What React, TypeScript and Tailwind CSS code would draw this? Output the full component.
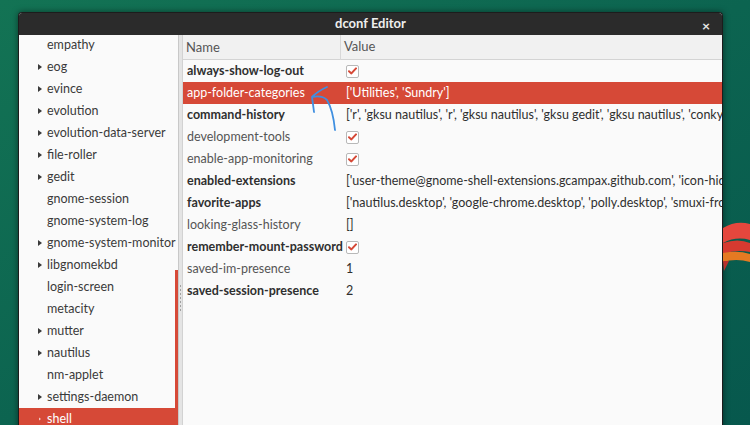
const SIDEBAR = [
  { name: 'empathy', arrow: false },
  { name: 'eog', arrow: true },
  { name: 'evince', arrow: true },
  { name: 'evolution', arrow: true },
  { name: 'evolution-data-server', arrow: true },
  { name: 'file-roller', arrow: true },
  { name: 'gedit', arrow: true },
  { name: 'gnome-session', arrow: false },
  { name: 'gnome-system-log', arrow: false },
  { name: 'gnome-system-monitor', arrow: true },
  { name: 'libgnomekbd', arrow: true },
  { name: 'login-screen', arrow: false },
  { name: 'metacity', arrow: false },
  { name: 'mutter', arrow: true },
  { name: 'nautilus', arrow: true },
  { name: 'nm-applet', arrow: false },
  { name: 'settings-daemon', arrow: true },
  { name: 'shell', arrow: true, selected: true },
];

interface Key {
  name: string;
  bold: boolean;
  value: string | boolean;
  selected?: boolean;
}

const KEYS: Key[] = [
  { name: 'always-show-log-out', bold: true, value: true },
  { name: 'app-folder-categories', bold: false, value: "['Utilities', 'Sundry']", selected: true },
  {
    name: 'command-history',
    bold: true,
    value: "['r', 'gksu nautilus', 'r', 'gksu nautilus', 'gksu gedit', 'gksu nautilus', 'conky', 'killall conky']",
  },
  { name: 'development-tools', bold: false, value: true },
  { name: 'enable-app-monitoring', bold: false, value: true },
  {
    name: 'enabled-extensions',
    bold: true,
    value: "['user-theme@gnome-shell-extensions.gcampax.github.com', 'icon-hider@kalnitsky.org']",
  },
  {
    name: 'favorite-apps',
    bold: true,
    value: "['nautilus.desktop', 'google-chrome.desktop', 'polly.desktop', 'smuxi-frontend-gnome.desktop']",
  },
  { name: 'looking-glass-history', bold: false, value: '[]' },
  { name: 'remember-mount-password', bold: true, value: true },
  { name: 'saved-im-presence', bold: false, value: '1' },
  { name: 'saved-session-presence', bold: true, value: '2' },
];

function Check() {
  return (
    <span className="flex h-[13px] w-[13px] items-center justify-center rounded-[2px] border border-[#b8b8b8] bg-white">
      <svg width="9" height="8" viewBox="0 0 9 8">
        <path d="M1 4.2 L3.4 6.4 L8 1.4" fill="none" stroke="#d64937" strokeWidth="2" strokeLinecap="round" strokeLinejoin="round" />
      </svg>
    </span>
  );
}

export default function App() {
  return (
    <div
      className="relative h-[425px] w-[750px] overflow-hidden bg-gradient-to-br from-[#137354] via-[#0c6450] to-[#07584d] text-[12.5px]"
      style={{ fontFamily: 'Lato, "Noto Sans", sans-serif' }}
    >
      {/* wallpaper shape at the right edge */}
      <svg className="absolute left-[723px] top-[220px]" width="27" height="55" viewBox="723 220 27 55">
        <path d="M723 228 Q736 220 750 224 L750 240 Q736 236 723 243 Z" fill="#e5473d" />
        <path d="M723 243 Q738 238 750 243 L750 252 Q736 249 723 254 Z" fill="#d63a30" />
        <path d="M723 253 Q738 250 750 254 L750 262 Q736 258 723 262 Z" fill="#e57a22" />
        <path d="M723 261 L729 261 L724 271 Z" fill="#b8322c" />
      </svg>

      <div className="ml-[18px] mt-[12px] flex h-[420px] w-[705px] flex-col overflow-hidden rounded-t-[4px] border border-b-0 border-[#1c1c1c] bg-[#fafafa] shadow-[0_0_6px_rgba(0,0,0,0.5)]">
        {/* title bar */}
        <div className="relative flex h-[22px] shrink-0 items-center justify-center bg-[#2b2b2b]">
          <span className="text-[13px] font-bold text-[#eeeeee]">dconf Editor</span>
          <span className="absolute right-[12px] top-[2px] text-[14px] font-bold text-[#e6e6e6]">×</span>
        </div>

        <div className="flex min-h-0 flex-1">
          {/* sidebar */}
          <div className="relative w-[159px] shrink-0 bg-[#fafafa]">
            <div className="-mt-[1px]">
              {SIDEBAR.map((item) => (
                <div
                  key={item.name}
                  className={`flex h-[22px] items-center ${item.selected ? 'bg-[#d64937] text-white' : 'text-[#3a3a3a]'}`}
                >
                  <span className="flex w-[28px] justify-end pr-[5px]">
                    {item.arrow && (
                      <span
                        className={`block h-0 w-0 border-y-[3.5px] border-l-[4px] border-y-transparent ${
                          item.selected ? 'scale-50 border-l-white/70' : 'border-l-[#3a3a3a]'
                        }`}
                      />
                    )}
                  </span>
                  <span className="whitespace-nowrap">{item.name}</span>
                </div>
              ))}
            </div>
            <div className="absolute right-0 top-[235px] h-[138px] w-[3px] bg-[#d64937]" />
          </div>

          {/* pane separator */}
          <div className="relative w-[5px] shrink-0 border-x border-l-[#c8c8c8] border-r-[#d2d2d2] bg-[#e4e4e4]">
            <div className="absolute left-[1px] top-[250px] flex flex-col gap-[2px]">
              {[0, 1, 2, 3, 4, 5, 6].map((i) => (
                <span key={i} className="block h-[2px] w-[1px] bg-[#a0a0a0]" />
              ))}
            </div>
          </div>

          {/* key list */}
          <div className="relative flex min-w-0 flex-1 flex-col bg-[#fafafa]">
            <div className="flex h-[25px] shrink-0 items-center border-b border-[#d4d4d4] bg-[#f1f1f1] text-[13px] text-[#555]">
              <span className="w-[158px] border-r border-[#d8d8d8] pl-[3px] leading-[25px]">Name</span>
              <span className="pl-[3px]">Value</span>
            </div>
            {KEYS.map((k) => (
              <div
                key={k.name}
                className={`flex h-[22px] items-center ${k.selected ? 'bg-[#d64937] text-white' : 'text-[#2f2f2f]'}`}
              >
                <span
                  className={`w-[160px] shrink-0 whitespace-nowrap pl-[4px] ${
                    k.bold ? 'font-bold' : k.selected ? '' : 'text-[#555]'
                  }`}
                >
                  {k.name}
                </span>
                <span className="min-w-0 overflow-hidden whitespace-nowrap pl-[3px]">
                  {typeof k.value === 'boolean' ? <Check /> : k.value}
                </span>
              </div>
            ))}

            {/* handwritten annotation arrow */}
            <svg className="absolute left-[119px] top-[47px]" width="40" height="50" viewBox="302 82 40 50">
              <path
                d="M327 87 Q318 91 312 97 Q313 104 314 112 M312 97 Q322 95 327 100 Q333 110 335 130"
                fill="none"
                stroke="#3f8fe0"
                strokeWidth="1.8"
                strokeLinecap="round"
                strokeLinejoin="round"
              />
            </svg>

            <div className="absolute bottom-0 left-0 h-[2px] w-[80px] bg-[#d64937]" />
          </div>
        </div>
      </div>
    </div>
  );
}
